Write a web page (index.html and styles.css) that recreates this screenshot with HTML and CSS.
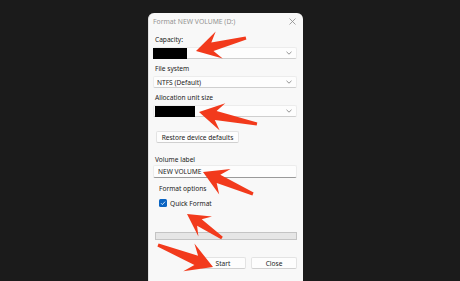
FILE: index.html
```html
<!DOCTYPE html>
<html lang="en">
<head>
    <meta charset="UTF-8">
    <meta name="viewport" content="width=device-width, initial-scale=1.0">
    <title>Format NEW VOLUME (D:)</title>
    <link rel="stylesheet" href="styles.css">
</head>
<body>
    <div class="screen">
        <div class="dialog">
            <div class="titlebar">
                <span class="title">Format NEW VOLUME (D:)</span>
                <svg class="close" width="7" height="7" viewBox="0 0 7 7">
                    <path d="M0.5 0.5 L6.5 6.5 M6.5 0.5 L0.5 6.5" stroke="#8a8a8a" stroke-width="0.8" fill="none"/>
                </svg>
            </div>

            <div class="content">
                <div class="field">
                    <div class="label">Capacity:</div>
                    <div class="combo">
                        <span class="redact redact-capacity"></span>
                        <svg class="chevron" width="6" height="4" viewBox="0 0 6 4">
                            <path d="M0.5 0.8 L3 3.2 L5.5 0.8" stroke="#777" stroke-width="0.8" fill="none"/>
                        </svg>
                    </div>
                </div>

                <div class="field">
                    <div class="label">File system</div>
                    <div class="combo">
                        <span class="value">NTFS (Default)</span>
                        <svg class="chevron" width="6" height="4" viewBox="0 0 6 4">
                            <path d="M0.5 0.8 L3 3.2 L5.5 0.8" stroke="#777" stroke-width="0.8" fill="none"/>
                        </svg>
                    </div>
                </div>

                <div class="field">
                    <div class="label">Allocation unit size</div>
                    <div class="combo">
                        <span class="redact redact-unit"></span>
                        <svg class="chevron" width="6" height="4" viewBox="0 0 6 4">
                            <path d="M0.5 0.8 L3 3.2 L5.5 0.8" stroke="#777" stroke-width="0.8" fill="none"/>
                        </svg>
                    </div>
                </div>

                <button class="btn btn-restore">Restore device defaults</button>

                <div class="field field-volume">
                    <div class="label">Volume label</div>
                    <div class="textbox">NEW VOLUME</div>
                </div>

                <div class="options">
                    <div class="options-title">Format options</div>
                    <label class="check-row">
                        <svg class="checkbox" width="8" height="8" viewBox="0 0 8 8">
                            <rect x="0" y="0" width="8" height="8" rx="1.5" fill="#0a64c2"/>
                            <path d="M2 4.2 L3.4 5.6 L6.1 2.6" stroke="#fff" stroke-width="0.8" fill="none"/>
                        </svg>
                        <span>Quick Format</span>
                    </label>
                </div>

                <div class="progress"></div>

                <div class="actions">
                    <button class="btn btn-action">Start</button>
                    <button class="btn btn-action">Close</button>
                </div>
            </div>
        </div>

        <!-- annotation arrows drawn over the screenshot -->
        <svg class="arrows" width="460" height="281" viewBox="0 0 460 281">
            <g fill="#f23a1c">
                <polygon points="196,51 215.7,31.5 211.3,42.4 245.6,36.5 246.4,39.5 213.5,51.1 222.7,58.5"/>
                <polygon points="199,112 225.3,103.2 216.6,111 257.3,122.5 256.7,125.5 214.8,119.9 219.7,130.6"/>
                <polygon points="203,172 230.6,169 220.3,174.8 253.6,192.6 252.4,195.4 216.7,183 219.2,194.6"/>
                <polygon points="187,214 212,216.6 201.7,219.2 222.8,236.8 221.2,239.2 197.1,225.8 198.4,236.4"/>
                <polygon points="213,267 194.4,243.4 198.1,255.7 158.6,243.6 157.4,246.4 194.4,265 183.3,271.3"/>
            </g>
        </svg>
    </div>
</body>
</html>
```

FILE: styles.css
```css
* {
    margin: 0;
    padding: 0;
    box-sizing: border-box;
}

body {
    background: #1b1b1b;
    font-family: 'Noto Sans', 'Open Sans', sans-serif;
    font-size: 6.6px;
    color: #1a1a1a;
}

.screen {
    position: relative;
    width: 460px;
    height: 281px;
    overflow: hidden;
    padding: 13px 0 0 148px;
}

.dialog {
    width: 155px;
    height: 290px;
    background: #f8f8f8;
    border-left: 1px solid #e2e2e2;
    border-radius: 6px 6px 0 0;
}

.titlebar {
    height: 17px;
    display: flex;
    align-items: center;
    justify-content: space-between;
    padding: 0 7px 0 4px;
}

.title {
    color: #939393;
    font-size: 6.8px;
}

.content {
    display: flex;
    flex-direction: column;
    padding: 0 6px 0 4px;
}

.field {
    margin-top: 5px;
}

.label {
    line-height: 10px;
    padding-left: 2px;
}

.combo {
    height: 12px;
    margin-top: 2px;
    display: flex;
    align-items: center;
    justify-content: space-between;
    padding-right: 4px;
    background: #fdfdfd;
    border: 1px solid #ececec;
    border-bottom-color: #cfcfcf;
    border-radius: 2px;
}

.combo .value {
    padding-left: 3px;
}

.redact {
    display: block;
    background: #000;
    height: 11px;
}

.redact-capacity {
    width: 34px;
    margin-left: -1px;
}

.redact-unit {
    width: 40px;
    margin-left: 1px;
}

.btn {
    font-family: inherit;
    font-size: 6.6px;
    color: #1a1a1a;
    background: #fdfdfd;
    border: 1px solid #e3e3e3;
    border-bottom-color: #d0d0d0;
    border-radius: 2px;
    height: 12px;
}

.btn-restore {
    width: 83px;
    margin: 14px 0 0 3px;
}

.field-volume {
    margin-top: 12px;
}

.textbox {
    height: 13px;
    line-height: 12px;
    padding-left: 4px;
    background: #fdfdfd;
    border: 1px solid #ececec;
    border-bottom: 1px solid #9a9a9a;
    border-radius: 2px;
}

.options {
    padding-left: 6px;
}

.options-title {
    margin-top: 6px;
    line-height: 10px;
}

.check-row {
    margin-top: 4px;
    height: 10px;
    display: flex;
    align-items: center;
    gap: 3px;
}

.progress {
    margin: 24px 0 0 2px;
    height: 8px;
    background: #e6e6e6;
    border: 1px solid #c4c4c4;
}

.actions {
    margin-top: 17px;
    display: flex;
    justify-content: flex-end;
    gap: 5px;
}

.btn-action {
    width: 46px;
}

.arrows {
    position: absolute;
    top: 0;
    left: 0;
}
```
